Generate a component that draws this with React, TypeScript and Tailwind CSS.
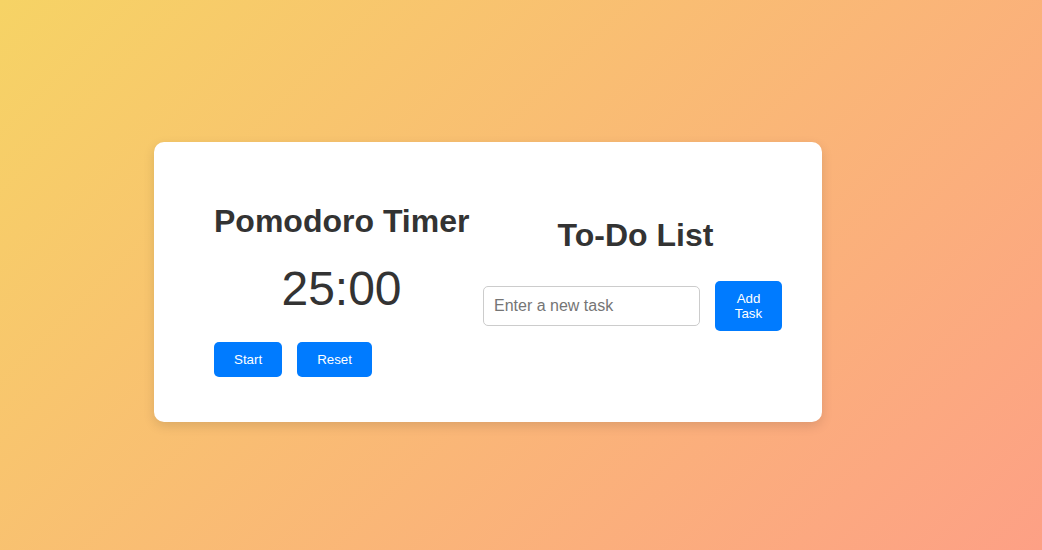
export default function App() {
  return (
    <main className="min-h-[550px] w-full bg-[linear-gradient(135deg,#f6d365_0%,#fda085_100%)] pl-[154px] pt-[142px] font-['Liberation_Sans',Arial,sans-serif] text-[#333]">
      <div className="flex w-[668px] items-start gap-[14px] rounded-[10px] bg-white pl-[60px] pr-[40px] pt-[61px] pb-[45px] shadow-[0_4px_12px_rgba(0,0,0,0.12)]">
        <section className="flex w-[255px] shrink-0 flex-col">
          <h2 className="whitespace-nowrap text-center text-[32px] font-bold leading-[37px]">Pomodoro Timer</h2>
          <div className="mt-[21px] text-center text-[48px] leading-[55px]">25:00</div>
          <div className="mt-[26px] flex gap-[15px]">
            <button className="rounded-[5px] bg-[#007bff] px-5 py-[10px] text-[13.33px] leading-[15px] text-white">
              Start
            </button>
            <button className="rounded-[5px] bg-[#007bff] px-5 py-[10px] text-[13.33px] leading-[15px] text-white">
              Reset
            </button>
          </div>
        </section>
        <section className="mt-[14px] flex flex-1 flex-col">
          <h2 className="whitespace-nowrap pl-[6px] text-center text-[32px] font-bold leading-[37px]">To-Do List</h2>
          <div className="mt-[27px] flex items-center gap-[15px]">
            <input
              type="text"
              placeholder="Enter a new task"
              className="h-10 w-[217px] rounded-[5px] border border-[#ccc] px-[10px] text-[16px] placeholder:text-[#757575] outline-none"
            />
            <button className="w-[67px] rounded-[5px] bg-[#007bff] py-[10px] text-[13.33px] leading-[15px] text-white">
              Add
              <br />
              Task
            </button>
          </div>
        </section>
      </div>
    </main>
  )
}
